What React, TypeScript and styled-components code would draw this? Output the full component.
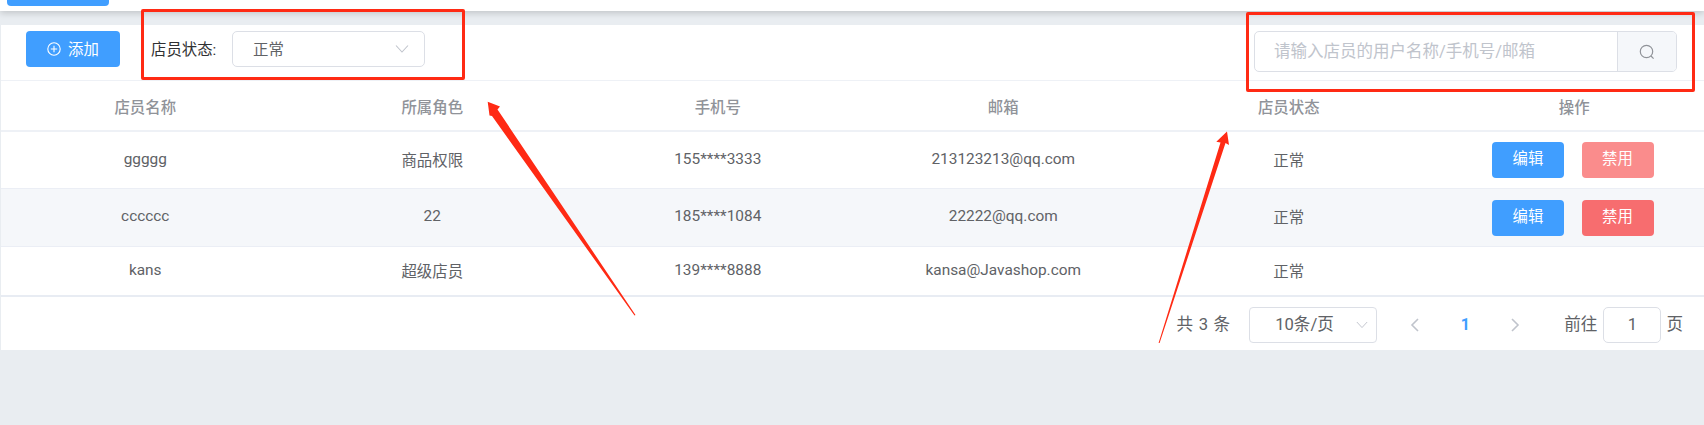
import styled, { createGlobalStyle } from "styled-components";

const members = [
  { name: "ggggg", role: "商品权限", phone: "155****3333", mail: "213123213@qq.com", banTone: "faded", height: 57 },
  { name: "cccccc", role: "22", phone: "185****1084", mail: "22222@qq.com", banTone: "solid", height: 58 },
  { name: "kans", role: "超级店员", phone: "139****8888", mail: "kansa@Javashop.com", banTone: "", height: 49 },
];

const Chevron = ({ size = 14 }: { size?: number }) => (
  <svg width={size} height={size} viewBox="0 0 14 14" fill="none">
    <polyline points="1,3.5 7,10 13,3.5" stroke="#c0c4cc" strokeWidth="1.1" />
  </svg>
);

const App = () => {
  return (
    <Page>
      <GlobalStyle />
      <TopBar>
        <TopTab />
      </TopBar>
      <Panel>
        <Toolbar>
          <AddButton>
            <svg width="14" height="14" viewBox="0 0 14 14" fill="none">
              <circle cx="7" cy="7" r="6.2" stroke="#fff" strokeWidth="1.1" />
              <path d="M7 3.8v6.4M3.8 7h6.4" stroke="#fff" strokeWidth="1.1" />
            </svg>
            <ButtonText>添加</ButtonText>
          </AddButton>
          <FilterLabel>店员状态:</FilterLabel>
          <StatusSelect>
            <ButtonText>正常</ButtonText>
            <Chevron />
          </StatusSelect>
          <SearchBox>
            <SearchText>请输入店员的用户名称/手机号/邮箱</SearchText>
            <SearchAppend>
              <svg width="16" height="16" viewBox="0 0 16 16" fill="none">
                <circle cx="7.5" cy="7.5" r="6.2" stroke="#909399" strokeWidth="1.2" />
                <path d="M12 12l2.6 2.6" stroke="#909399" strokeWidth="1.2" />
              </svg>
            </SearchAppend>
          </SearchBox>
        </Toolbar>
        <HeadRow>
          <div>店员名称</div>
          <div>所属角色</div>
          <div>手机号</div>
          <div>邮箱</div>
          <div>店员状态</div>
          <LastCell>操作</LastCell>
        </HeadRow>
        {members.map((m, i) => {
          return (
            <Row key={m.name} $striped={i === 1} $height={m.height}>
              <div>{m.name}</div>
              <div>{m.role}</div>
              <div>{m.phone}</div>
              <div>{m.mail}</div>
              <div>正常</div>
              <LastCell>
                {m.banTone && (
                  <Actions>
                    <ActionButton $tone="edit">编辑</ActionButton>
                    <ActionButton $tone={m.banTone}>禁用</ActionButton>
                  </Actions>
                )}
              </LastCell>
            </Row>
          );
        })}
        <Footer>
          <Total>共 3 条</Total>
          <SizeSelect>
            10条/页
            <ChevronSlot>
              <Chevron size={12} />
            </ChevronSlot>
          </SizeSelect>
          <PagerButton $first>
            <svg width="10" height="14" viewBox="0 0 10 14" fill="none">
              <polyline points="8,1 2,7 8,13" stroke="#c0c4cc" strokeWidth="1.6" />
            </svg>
          </PagerButton>
          <PagerButton $active>1</PagerButton>
          <PagerButton>
            <svg width="10" height="14" viewBox="0 0 10 14" fill="none">
              <polyline points="2,1 8,7 2,13" stroke="#c0c4cc" strokeWidth="1.6" />
            </svg>
          </PagerButton>
          <JumpLabel>前往</JumpLabel>
          <JumpInput>1</JumpInput>
          <span>页</span>
        </Footer>
      </Panel>
      <Marker $left={141} $top={9} $width={324} $height={71} />
      <Marker $left={1246} $top={12} $width={449} $height={80} />
      <ArrowLayer width="1704" height="425" viewBox="0 0 1704 425">
        <polygon
          fill="#ff2a14"
          points="487.7,101.7 500,106.5 497.5,109.5 635.5,315 634.5,315.5 492,116 489.5,115.5"
        />
        <polygon
          fill="#ff2a14"
          points="1227,131.6 1229,145 1225.5,143 1159.6,343 1158.6,343 1220.5,142.5 1216.3,141.7"
        />
      </ArrowLayer>
    </Page>
  );
};

export default App;

const GlobalStyle = createGlobalStyle`
  html, body {
    margin: 0;
    padding: 0;
    background: #e9edf1;
  }
  * {
    box-sizing: border-box;
  }
`;
const Page = styled.div`
  position: relative;
  width: 1704px;
  height: 425px;
  overflow: hidden;
  background: #e9edf1;
  font-family: Roboto, "Noto Sans CJK SC", sans-serif;
  font-size: 15.4px;
  color: #606266;
`;
const TopBar = styled.div`
  height: 11px;
  padding-left: 7px;
  background: #fff;
  box-shadow: 0 2px 7px rgba(0, 0, 0, 0.18);
`;
const TopTab = styled.div`
  width: 102px;
  height: 6px;
  background: #409eff;
  border-radius: 0 0 4px 4px;
`;
const Panel = styled.div`
  margin: 14px 0 0 1px;
  width: 1703px;
  background: #fff;
`;
const Toolbar = styled.div`
  height: 56px;
  padding: 6px 27px 0 25px;
  display: flex;
  align-items: flex-start;
  border-bottom: 1px solid #eef1f6;
`;
const AddButton = styled.div`
  width: 94px;
  height: 36px;
  display: flex;
  justify-content: center;
  align-items: center;
  gap: 7px;
  background: #409eff;
  border-radius: 4px;
  color: #fff;
`;
const ButtonText = styled.span`
  margin-bottom: 2px;
`;
const FilterLabel = styled.div`
  margin-left: 31px;
  width: 81px;
  line-height: 38px;
  color: #303133;
`;
const StatusSelect = styled.div`
  width: 193px;
  height: 36px;
  padding: 0 15px 0 20px;
  display: flex;
  justify-content: space-between;
  align-items: center;
  border: 1px solid #dcdfe6;
  border-radius: 5px;
`;
const SearchBox = styled.div`
  margin-left: auto;
  width: 423px;
  height: 41px;
  display: flex;
  border: 1px solid #dcdfe6;
  border-radius: 5px;
  overflow: hidden;
`;
const SearchText = styled.div`
  flex: 1;
  padding-left: 19px;
  line-height: 40px;
  font-size: 16.5px;
  color: #c0c4cc;
`;
const SearchAppend = styled.div`
  width: 59px;
  display: flex;
  justify-content: center;
  align-items: center;
  background: #f5f7fa;
  border-left: 1px solid #dcdfe6;
`;
const Grid = styled.div`
  display: grid;
  grid-template-columns: 288.5px repeat(4, 285.5px) 272.5px;
  align-items: center;
  text-align: center;
`;
const HeadRow = styled(Grid)`
  height: 51px;
  border-bottom: 2px solid #eef1f6;
  font-weight: 500;
  color: #909399;
`;
const Row = styled(Grid)<{ $striped: boolean; $height: number }>`
  height: ${(p) => p.$height}px;
  padding-bottom: 3px;
  background: ${(p) => (p.$striped ? "#f5f7fa" : "#fff")};
  border-bottom: 1px solid #ebeef5;
`;
const LastCell = styled.div`
  padding-left: 13px;
`;
const Actions = styled.div`
  margin: 3px 0 0 -3px;
  display: flex;
  justify-content: center;
  gap: 17.5px;
`;
const ActionButton = styled.div<{ $tone: string }>`
  width: 72px;
  height: 36px;
  line-height: 35px;
  border-radius: 4px;
  color: #fff;
  background: ${(p) =>
    p.$tone === "edit" ? "#409eff" : p.$tone === "faded" ? "#fa8c8c" : "#f76d6f"};
`;
const Footer = styled.div`
  height: 55px;
  margin-top: -1px;
  padding: 10px 21px 0 0;
  display: flex;
  justify-content: flex-end;
  align-items: flex-start;
  border-top: 2px solid #e8ecf3;
  font-size: 16.6px;
  line-height: 36px;
`;
const Total = styled.span`
  margin-right: 19px;
  word-spacing: 1.5px;
`;
const SizeSelect = styled.div`
  position: relative;
  width: 128px;
  height: 36px;
  padding-left: 25px;
  line-height: 34px;
  border: 1px solid #dcdfe6;
  border-radius: 4px;
`;
const ChevronSlot = styled.span`
  position: absolute;
  right: 8px;
  top: 11px;
  line-height: 0;
`;
const PagerButton = styled.div<{ $first?: boolean; $active?: boolean }>`
  width: 50px;
  height: 36px;
  margin-left: ${(p) => (p.$first ? "13px" : "0")};
  display: flex;
  justify-content: center;
  align-items: center;
  font-size: 16px;
  font-weight: ${(p) => (p.$active ? 700 : 400)};
  color: ${(p) => (p.$active ? "#409eff" : "#c0c4cc")};
`;
const JumpLabel = styled.span`
  margin-left: 24px;
  margin-right: 6px;
`;
const JumpInput = styled.div`
  width: 58px;
  height: 36px;
  margin-right: 5px;
  line-height: 34px;
  text-align: center;
  border: 1px solid #dcdfe6;
  border-radius: 5px;
`;
const Marker = styled.div<{ $left: number; $top: number; $width: number; $height: number }>`
  position: absolute;
  left: ${(p) => p.$left}px;
  top: ${(p) => p.$top}px;
  width: ${(p) => p.$width}px;
  height: ${(p) => p.$height}px;
  border: 3px solid #ff2a14;
  border-radius: 2px;
`;
const ArrowLayer = styled.svg`
  position: absolute;
  left: 0;
  top: 0;
`;
